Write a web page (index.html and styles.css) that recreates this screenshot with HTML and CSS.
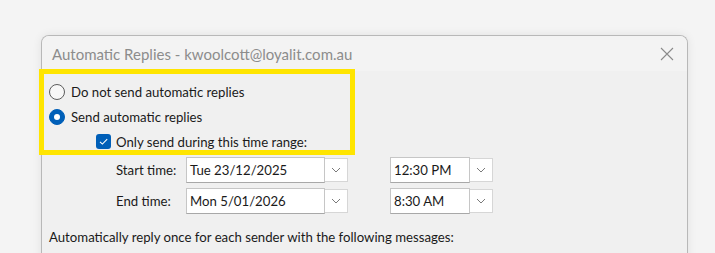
FILE: index.html
```html
<!DOCTYPE html>
<html>
<head>
<meta charset="utf-8">
<link rel="stylesheet" href="styles.css">
</head>
<body>
<div class="dialog">
  <div class="titlebar">
    <span class="title">Automatic Replies - kwoolcott@loyalit.com.au</span>
    <svg class="close" width="14" height="14" viewBox="0 0 14 14"><path d="M1 1 L13 13 M13 1 L1 13" stroke="#8a8a8a" stroke-width="1.1" fill="none"/></svg>
  </div>
  <div class="content">
    <div class="option"><span class="radio"></span><span>Do not send automatic replies</span></div>
    <div class="option"><span class="radio checked"></span><span>Send automatic replies</span></div>
    <div class="option check-row">
      <span class="checkbox"><svg width="15" height="15" viewBox="0 0 15 15"><path d="M4 7.8 L6.4 10.1 L11.2 5.2" stroke="#fff" stroke-width="1.1" fill="none"/></svg></span>
      <span>Only send during this time range:</span>
    </div>
    <div class="times">
      <span class="label">Start time:</span>
      <div class="combo date"><span class="field">Tue 23/12/2025</span><span class="drop"><svg width="10" height="6" viewBox="0 0 10 6"><path d="M1 1 L5 5 L9 1" stroke="#7a7a7a" stroke-width="1" fill="none"/></svg></span></div>
      <div class="combo time"><span class="field">12:30 PM</span><span class="drop"><svg width="10" height="6" viewBox="0 0 10 6"><path d="M1 1 L5 5 L9 1" stroke="#7a7a7a" stroke-width="1" fill="none"/></svg></span></div>
      <span class="label">End time:</span>
      <div class="combo date"><span class="field">Mon 5/01/2026</span><span class="drop"><svg width="10" height="6" viewBox="0 0 10 6"><path d="M1 1 L5 5 L9 1" stroke="#7a7a7a" stroke-width="1" fill="none"/></svg></span></div>
      <div class="combo time"><span class="field">8:30 AM</span><span class="drop"><svg width="10" height="6" viewBox="0 0 10 6"><path d="M1 1 L5 5 L9 1" stroke="#7a7a7a" stroke-width="1" fill="none"/></svg></span></div>
    </div>
    <div class="message">Automatically reply once for each sender with the following messages:</div>
  </div>
</div>
<div class="highlight"></div>
</body>
</html>
```
FILE: styles.css
```css
html, body {
  margin: 0;
  padding: 0;
}
body {
  background: #f4f4f4;
  font-family: "Lato", "Noto Sans", sans-serif;
  color: #1a1a1a;
  height: 253px;
  overflow: hidden;
  position: relative;
}
.dialog {
  margin: 35px 0 0 41px;
  width: 645px;
  height: 260px;
  border: 1.5px solid #b8b8b8;
  border-bottom: none;
  border-radius: 8px 8px 0 0;
  background: #f0f0f0;
  box-shadow: 0 0 10px rgba(0,0,0,0.08);
  overflow: hidden;
}
.titlebar {
  height: 35px;
  background: #f3f3f3;
  display: flex;
  align-items: center;
  justify-content: space-between;
  padding: 0 12px 0 10px;
}
.title {
  font-size: 15px;
  color: #8c8c8c;
}
.close {
  margin-right: 1px;
}
.content {
  padding: 8px 0 0 7px;
  font-size: 13.2px;
}
.option {
  display: flex;
  align-items: center;
  gap: 6px;
  height: 25px;
}
.radio {
  width: 14px;
  height: 14px;
  border: 1px solid #5c5c5c;
  border-radius: 50%;
  background: #f7f7f7;
  box-sizing: content-box;
}
.radio.checked {
  border-color: #005fb8;
  background: #005fb8;
  position: relative;
}
.radio.checked::after {
  content: "";
  position: absolute;
  left: 4px;
  top: 4px;
  width: 6px;
  height: 6px;
  border-radius: 50%;
  background: #fff;
}
.check-row {
  padding-left: 47px;
  gap: 5px;
}
.checkbox {
  width: 15px;
  height: 15px;
  border-radius: 3px;
  background: #005fb8;
  display: flex;
}
.times {
  display: grid;
  grid-template-columns: 70px 204px auto;
  row-gap: 5px;
  padding: 3px 0 0 67px;
  align-items: center;
}
.combo {
  display: flex;
  align-items: center;
}
.field {
  height: 24px;
  line-height: 24px;
  border: 1px solid #c6c6c6;
  border-bottom-color: #a8a8a8;
  background: #fff;
  padding-left: 3px;
  box-sizing: content-box;
}
.date .field { width: 134px; }
.time .field { width: 75px; }
.drop {
  width: 22px;
  height: 22px;
  border: 1px solid #d6d6d6;
  border-left: none;
  background: #fff;
  display: flex;
  align-items: center;
  justify-content: center;
}
.message {
  margin-top: 15px;
}
.highlight {
  position: absolute;
  left: 39px;
  top: 69px;
  width: 306px;
  height: 76px;
  border: 5px solid #ffe500;
}
```
